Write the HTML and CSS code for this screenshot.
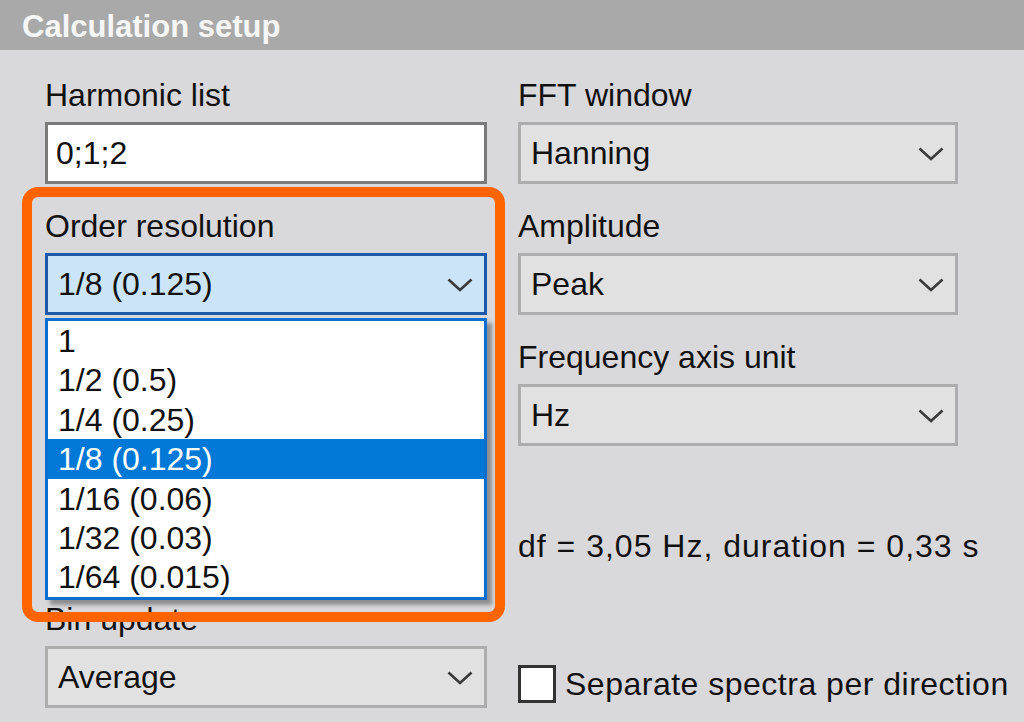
FILE: index.html
```html
<!DOCTYPE html>
<html>
<head>
<meta charset="utf-8">
<link rel="stylesheet" href="styles.css">
</head>
<body>
<div class="header"><span class="title">Calculation setup</span></div>
<div class="form">
  <div class="field f-harm">
    <div class="label">Harmonic list</div>
    <div class="input">0;1;2</div>
  </div>
  <div class="field f-fft">
    <div class="label">FFT window</div>
    <div class="combo"><span>Hanning</span><svg class="chev" viewBox="0 0 26 14"><polyline points="1.5,1.5 13,12 24.5,1.5"/></svg></div>
  </div>
  <div class="field f-order">
    <div class="label">Order resolution</div>
    <div class="combo focused"><span>1/8 (0.125)</span><svg class="chev" viewBox="0 0 26 14"><polyline points="1.5,1.5 13,12 24.5,1.5"/></svg></div>
    <ul class="list">
      <li>1</li>
      <li>1/2 (0.5)</li>
      <li>1/4 (0.25)</li>
      <li class="sel">1/8 (0.125)</li>
      <li>1/16 (0.06)</li>
      <li>1/32 (0.03)</li>
      <li>1/64 (0.015)</li>
    </ul>
    <div class="highlight"></div>
  </div>
  <div class="field f-amp">
    <div class="label">Amplitude</div>
    <div class="combo"><span>Peak</span><svg class="chev" viewBox="0 0 26 14"><polyline points="1.5,1.5 13,12 24.5,1.5"/></svg></div>
  </div>
  <div class="field f-freq">
    <div class="label">Frequency axis unit</div>
    <div class="combo"><span>Hz</span><svg class="chev" viewBox="0 0 26 14"><polyline points="1.5,1.5 13,12 24.5,1.5"/></svg></div>
  </div>
  <div class="info">df = 3,05 Hz, duration = 0,33 s</div>
  <div class="field f-bin">
    <div class="label">Bin update</div>
    <div class="combo"><span>Average</span><svg class="chev" viewBox="0 0 26 14"><polyline points="1.5,1.5 13,12 24.5,1.5"/></svg></div>
  </div>
  <div class="check">
    <span class="box"></span>
    <span class="check-label">Separate spectra per direction</span>
  </div>
</div>
</body>
</html>
```
FILE: styles.css
```css
html, body {
  margin: 0;
  padding: 0;
}
body {
  width: 1024px;
  height: 722px;
  overflow: hidden;
  background: #d9d8da;
  font-family: "Liberation Sans", Arial, sans-serif;
  font-size: 32px;
  color: #111;
}
.header {
  height: 50px;
  box-sizing: border-box;
  padding: 8px 0 0 22px;
  background: #a9a9a9;
}
.title {
  font-weight: bold;
  font-size: 31px;
  line-height: 36px;
  color: #f6f6f6;
}
.form {
  display: grid;
  grid-template-columns: 442px 440px;
  grid-template-rows: repeat(5, 108px);
  column-gap: 31px;
  row-gap: 23px;
  padding: 26px 0 0 45px;
}
.field {
  display: flex;
  flex-direction: column;
}
.label {
  height: 38px;
  line-height: 38px;
  margin-bottom: 8px;
  white-space: nowrap;
}
.input, .combo {
  height: 62px;
  box-sizing: border-box;
  display: flex;
  align-items: center;
  white-space: nowrap;
}
.input {
  background: #fff;
  border: 3px solid #7a7a7a;
  padding-left: 8px;
}
.combo {
  background: #e1e1e1;
  border: 3px solid #adadad;
  padding: 0 11px 0 10px;
  justify-content: space-between;
}
.combo.focused {
  height: 65px;
  background: #cce4f7;
  border-color: #1a5aa8;
}
.chev {
  width: 26px;
  height: 14px;
  margin-top: 2px;
}
.chev polyline {
  fill: none;
  stroke: #3a3a3a;
  stroke-width: 2.6;
}
.f-harm { grid-column: 1; grid-row: 1; }
.f-fft { grid-column: 2; grid-row: 1; }
.f-order { grid-column: 1; grid-row: 2; position: relative; }
.f-amp { grid-column: 2; grid-row: 2; }
.f-freq { grid-column: 2; grid-row: 3; }
.info {
  grid-column: 2;
  grid-row: 4;
  padding-top: 58px;
  line-height: 38px;
  white-space: nowrap;
  letter-spacing: 1px;
}
.f-bin { grid-column: 1; grid-row: 5; }
.check {
  grid-column: 2;
  grid-row: 5;
  padding-top: 65px;
  display: flex;
  align-items: center;
  height: 38px;
  white-space: nowrap;
}
.box {
  width: 38px;
  height: 38px;
  box-sizing: border-box;
  border: 3px solid #333;
  background: #fff;
  flex: none;
}
.check-label {
  margin-left: 9px;
  letter-spacing: 0.5px;
}
.list {
  position: absolute;
  left: 0;
  top: 111px;
  width: 442px;
  margin: 0;
  padding: 0;
  list-style: none;
  box-sizing: border-box;
  background: #fff;
  border: 3px solid #0a6fd0;
  box-shadow: 5px 5px 4px rgba(0, 0, 0, 0.35);
  z-index: 2;
}
.list li {
  height: 39.4px;
  line-height: 41px;
  padding-left: 10px;
}
.list li.sel {
  background: #0078d7;
  color: #fff;
}
.highlight {
  position: absolute;
  left: -23px;
  top: -20px;
  width: 483px;
  height: 435px;
  box-sizing: border-box;
  border: 10px solid #ff6400;
  border-radius: 16px;
  pointer-events: none;
  z-index: 3;
}
```
